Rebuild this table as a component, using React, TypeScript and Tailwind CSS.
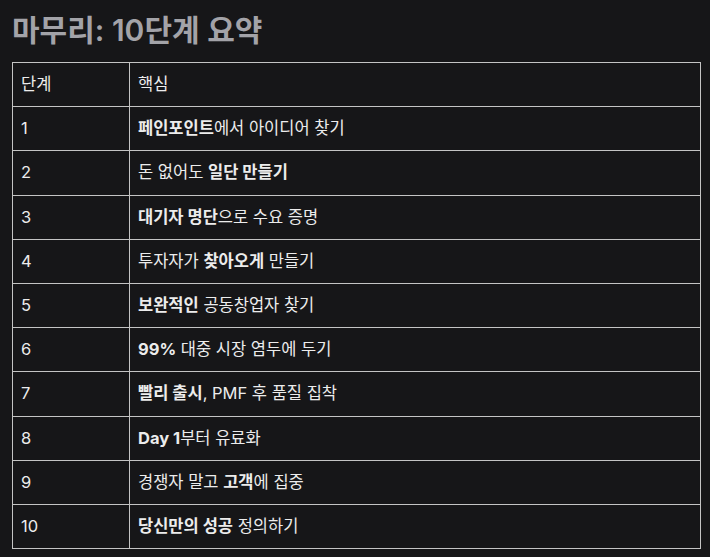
import React from "react";

const rows: { n: string; c: React.ReactNode }[] = [
  { n: "1", c: <><b className="font-bold">페인포인트</b>에서 아이디어 찾기</> },
  { n: "2", c: <>돈 없어도 <b className="font-bold">일단 만들기</b></> },
  { n: "3", c: <><b className="font-bold">대기자 명단</b>으로 수요 증명</> },
  { n: "4", c: <>투자자가 <b className="font-bold">찾아오게</b> 만들기</> },
  { n: "5", c: <><b className="font-bold">보완적인</b> 공동창업자 찾기</> },
  { n: "6", c: <><b className="font-bold">99%</b> 대중 시장 염두에 두기</> },
  { n: "7", c: <><b className="font-bold">빨리 출시</b>, PMF 후 품질 집착</> },
  { n: "8", c: <><b className="font-bold">Day 1</b>부터 유료화</> },
  { n: "9", c: <>경쟁자 말고 <b className="font-bold">고객</b>에 집중</> },
  { n: "10", c: <><b className="font-bold">당신만의 성공</b> 정의하기</> },
];

export default function App() {
  return (
    <div
      className="w-[710px] h-[557px] bg-[#161618] overflow-hidden px-[12px] pt-[10px]"
      style={{ fontFamily: 'Inter, "Noto Sans CJK KR", sans-serif' }}
    >
      <h1 className="text-[30px] leading-[40px] font-semibold text-[#a3a3a8]">
        마무리: 10단계 요약
      </h1>
      <table className="mt-[12px] w-[689px] border-collapse text-[16.5px] text-[#ececec]">
        <tbody>
          <tr>
            <td className="w-[117px] border border-[#c4c4c4] px-[8px] py-[10px] leading-[23.2px]">단계</td>
            <td className="border border-[#c4c4c4] px-[8px] py-[10px] leading-[23.2px]">핵심</td>
          </tr>
          {rows.map((r) => (
            <tr key={r.n}>
              <td className="border border-[#c4c4c4] px-[8px] py-[10px] leading-[23.2px]">{r.n}</td>
              <td className="border border-[#c4c4c4] px-[8px] py-[10px] leading-[23.2px]">{r.c}</td>
            </tr>
          ))}
        </tbody>
      </table>
    </div>
  );
}
